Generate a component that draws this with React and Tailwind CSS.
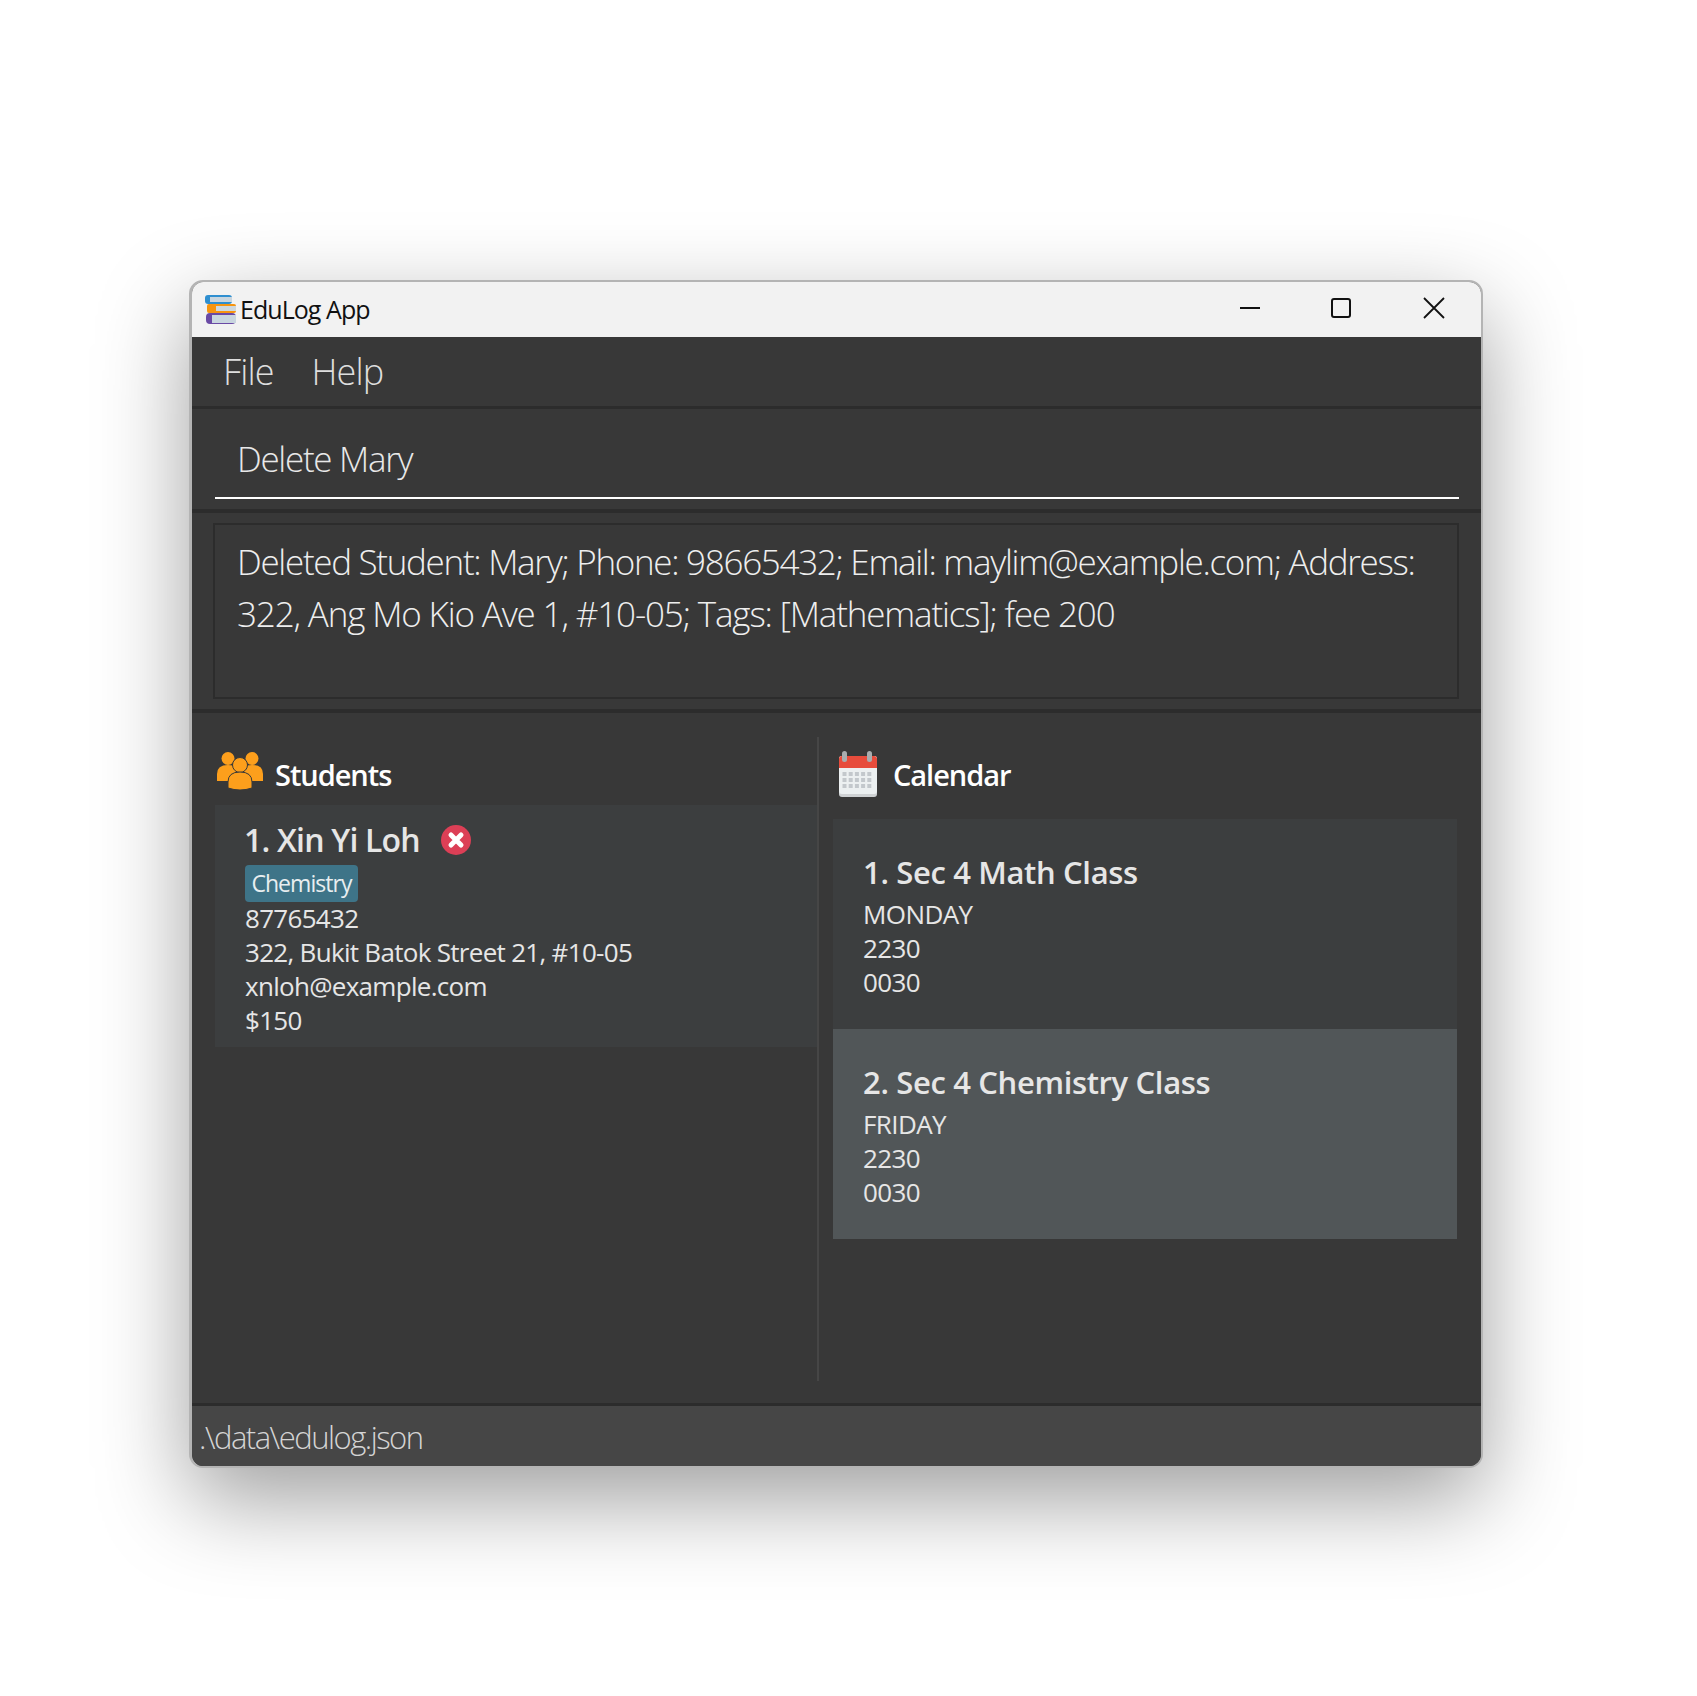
import React from "react";

const light = { fontFamily: '"Open Sans", "Noto Sans", sans-serif' };

function BooksIcon() {
  return (
    <svg width="31" height="31" viewBox="0 0 31 31" className="shrink-0">
      <rect x="0" y="1" width="27" height="9" rx="3" fill="#2f8fd0" />
      <rect x="5" y="3" width="22" height="5" fill="#c9d6df" />
      <rect x="2" y="10" width="29" height="9" rx="2" fill="#f7950f" />
      <rect x="11" y="12" width="20" height="5" fill="#cfd8dd" />
      <rect x="1" y="19" width="30" height="11" rx="4" fill="#6a4aa5" />
      <rect x="7" y="21" width="24" height="8" fill="#c9d6df" />
    </svg>
  );
}

function PeopleIcon() {
  return (
    <svg width="46" height="40" viewBox="0 0 46 40" className="shrink-0">
      <circle cx="11" cy="7.5" r="6.5" fill="#fd9f1c" />
      <circle cx="35" cy="7.5" r="6.5" fill="#fd9f1c" />
      <path d="M0 30 V23 Q0 14 11 14 Q22 14 22 23 V30 Z" fill="#fd9f1c" />
      <path d="M24 30 V23 Q24 14 35 14 Q46 14 46 23 V30 Z" fill="#fd9f1c" />
      <circle cx="23" cy="14" r="7.5" fill="#fd9f1c" stroke="#383838" strokeWidth="1" />
      <path d="M11 37 V31 Q11 21 23 21 Q35 21 35 31 V37 Q23 41 11 37 Z" fill="#fd9f1c" stroke="#383838" strokeWidth="1" />
    </svg>
  );
}

function CalendarIcon() {
  const cells = [];
  for (let r = 0; r < 3; r++) {
    for (let c = 0; c < 5; c++) {
      cells.push(<rect key={r + "-" + c} x={4.5 + c * 6.2} y={21 + r * 6} width="4" height="4" fill="#c3c8cc" />);
    }
  }
  return (
    <svg width="40" height="46" viewBox="0 0 40 46" className="shrink-0">
      <rect x="1" y="5" width="38" height="41" rx="3" fill="#cfd2d4" />
      <rect x="1" y="5" width="38" height="38" rx="3" fill="#ecf0f1" />
      <path d="M1 17 V8 Q1 5 4 5 H36 Q39 5 39 8 V17 Z" fill="#e74c3c" />
      {cells}
      <rect x="4" y="0" width="5" height="11" rx="2.5" fill="#a9adaf" />
      <rect x="29" y="0" width="5" height="11" rx="2.5" fill="#a9adaf" />
    </svg>
  );
}

function RemoveIcon() {
  return (
    <svg width="30" height="30" viewBox="0 0 30 30" className="shrink-0">
      <circle cx="15" cy="15" r="15" fill="#dc3f56" />
      <path d="M10 10 L20 20 M20 10 L10 20" stroke="#ffffff" strokeWidth="5" strokeLinecap="round" />
    </svg>
  );
}

function CalendarCard({ title, day, bg }) {
  return (
    <div className={"h-[210px] pl-[30px] pt-[31px] " + bg}>
      <div className="text-[31px] leading-[44px] font-semibold text-[#e6e6e6] tracking-[-0.35px]">{title}</div>
      <div className="text-[26px] leading-[34px] text-[#e6e6e6] tracking-[-0.6px] mt-[3px]">
        <div>{day}</div>
        <div>2230</div>
        <div>0030</div>
      </div>
    </div>
  );
}

export default function App() {
  return (
    <div className="min-h-[1696px] bg-white pt-[280px] pl-[189px]" style={light}>
      <div className="w-[1294px] h-[1188px] flex flex-col rounded-[14px] overflow-hidden border-2 border-l-[3px] border-[#b4b4b4] shadow-[0_32px_90px_rgba(0,0,0,0.38)] bg-[#383838]">
        {/* title bar */}
        <div className="h-[55px] shrink-0 bg-[#f2f2f2] flex items-center pl-[13px] text-black">
          <BooksIcon />
          <span className="ml-[4px] text-[25px] tracking-[-0.95px] text-[#111]">EduLog App</span>
          <div className="ml-auto flex items-center pb-[4px] text-[#111]">
            <svg width="22" height="22" viewBox="0 0 22 22" className="mr-[69px]"><path d="M1 11 H21" stroke="#111" strokeWidth="2" /></svg>
            <svg width="22" height="22" viewBox="0 0 22 22" className="mr-[71px]"><rect x="2" y="2" width="18" height="18" rx="2" fill="none" stroke="#111" strokeWidth="2" /></svg>
            <svg width="22" height="22" viewBox="0 0 22 22" className="mr-[36px]"><path d="M1 1 L21 21 M21 1 L1 21" stroke="#111" strokeWidth="1.8" /></svg>
          </div>
        </div>

        {/* menu */}
        <div className="h-[72px] shrink-0 flex items-center pl-[31px] gap-[38px] text-[36px] font-light text-[#dedede] tracking-[-0.9px] border-b-[3px] border-[#2c2c2c]">
          <span>File</span>
          <span>Help</span>
        </div>

        {/* command box */}
        <div className="h-[104px] shrink-0 pl-[23px] pr-[22px] border-b-[4px] border-[#2c2c2c]">
          <div className="h-[90px] flex items-center pl-[22px] pt-[12px] border-b-2 border-white text-[35px] font-light text-[#e8e8e8] tracking-[-1.3px]">
            Delete Mary
          </div>
        </div>

        {/* result */}
        <div className="h-[200px] shrink-0 pl-[21px] pr-[22px] pt-[10px] border-b-[4px] border-[#2c2c2c]">
          <div className="h-[176px] border-2 border-[#2c2c2c] pl-[22px] pr-[10px] pt-[11px] text-[35px] leading-[52px] font-light text-[#eeeeee] whitespace-nowrap">
            <div className="tracking-[-1.3px]">Deleted Student: Mary; Phone: 98665432; Email: maylim@example.com; Address:</div>
            <div className="tracking-[-1.15px]">322, Ang Mo Kio Ave 1, #10-05; Tags: [Mathematics]; fee 200</div>
          </div>
        </div>

        {/* panels */}
        <div className="flex-1 flex min-h-0 pl-[23px] pr-[24px] pt-[24px] pb-[22px]">
          <div className="w-[602px] shrink-0 flex flex-col">
            <div className="h-[68px] shrink-0 flex items-start pl-[2px]">
              <span className="mt-[14px]"><PeopleIcon /></span>
              <span className="ml-[12px] mt-[18px] text-[29px] leading-[40px] font-semibold text-white tracking-[-1.05px]">Students</span>
            </div>
            <div className="h-[242px] bg-[#3c3e3f] pl-[29px] pt-[13px]">
              <div className="flex items-center h-[44px] text-[32px] font-semibold text-[#e6e6e6] tracking-[-0.8px]">
                <span>1. Xin Yi Loh</span>
                <span className="ml-[21px]"><RemoveIcon /></span>
              </div>
              <div className="mt-[3px] ml-[1px] w-[113px] h-[37px] rounded-[4px] bg-[#3e7488] text-[#e8eef0] text-[23px] flex items-center justify-center tracking-[-0.95px]">Chemistry</div>
              <div className="ml-[1px] -mt-[1px] text-[26px] leading-[34px] text-[#e6e6e6] tracking-[-0.7px]">
                <div>87765432</div>
                <div>322, Bukit Batok Street 21, #10-05</div>
                <div>xnloh@example.com</div>
                <div>$150</div>
              </div>
            </div>
          </div>
          <div className="w-[2px] shrink-0 bg-[#464646]"></div>
          <div className="flex-1 min-w-0 pl-[14px] flex flex-col">
            <div className="h-[82px] shrink-0 flex items-start pl-[5px]">
              <span className="mt-[14px]"><CalendarIcon /></span>
              <span className="ml-[15px] mt-[18px] text-[29px] leading-[40px] font-semibold text-white tracking-[-1.05px]">Calendar</span>
            </div>
            <CalendarCard title="1. Sec 4 Math Class" day="MONDAY" bg="bg-[#3c3e3f]" />
            <CalendarCard title="2. Sec 4 Chemistry Class" day="FRIDAY" bg="bg-[#515658]" />
          </div>
        </div>

        {/* status bar */}
        <div className="h-[63px] shrink-0 flex items-center pl-[7px] pt-[2px] bg-[#464646] border-t-[3px] border-[#2c2c2c] text-[31px] font-light text-[#d4d4d4] tracking-[-1.5px]">
          .\data\edulog.json
        </div>
      </div>
    </div>
  );
}
